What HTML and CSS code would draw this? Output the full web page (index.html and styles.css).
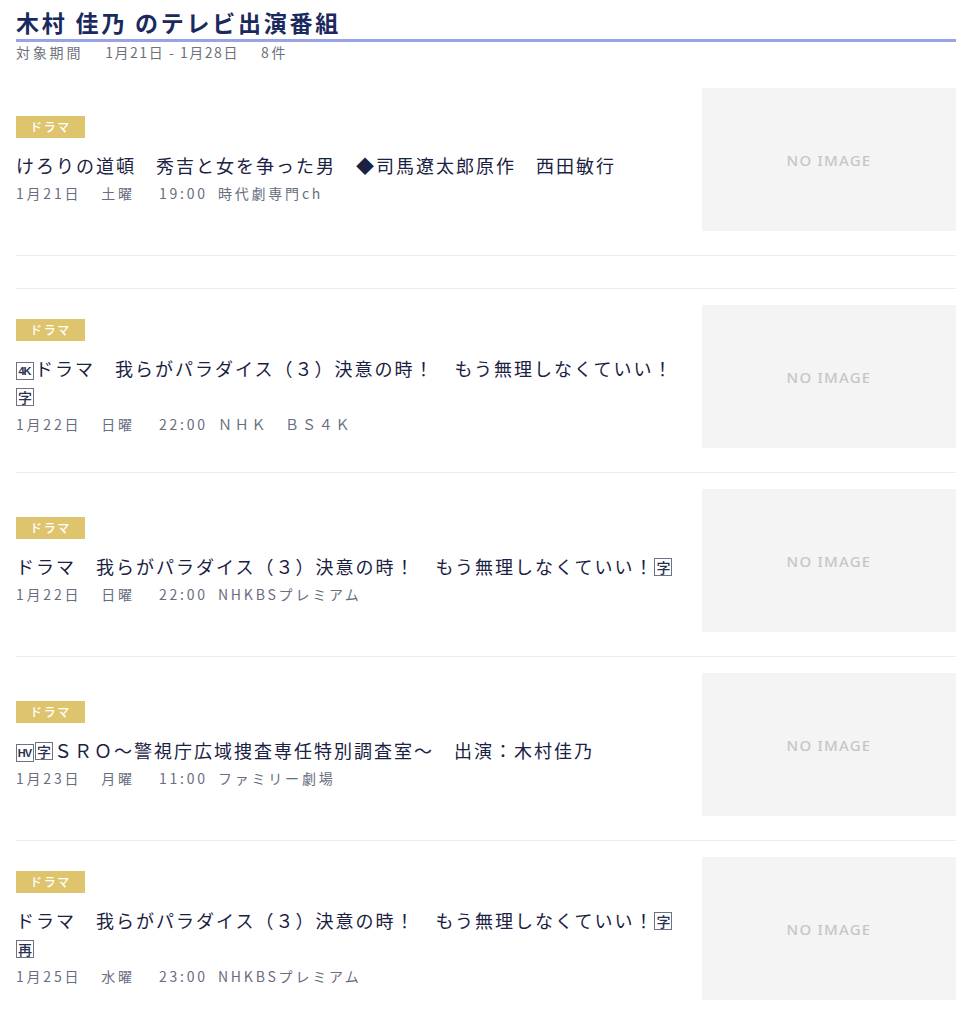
FILE: index.html
```html
<!DOCTYPE html>
<html lang="ja">
<head>
<meta charset="utf-8">
<title>木村 佳乃 のテレビ出演番組</title>
<link rel="stylesheet" href="styles.css">
</head>
<body>
<div class="page">
  <header class="head">
    <h1 class="head-title">木村 佳乃 のテレビ出演番組</h1>
    <p class="head-sub"><span class="hs">対象期間</span><span class="hs hs-date">1月21日 - 1月28日</span><span>8件</span></p>
  </header>

  <ul class="list">
    <li class="item">
      <div class="info">
        <span class="badge">ドラマ</span>
        <p class="title">けろりの道頓　秀吉と女を争った男　◆司馬遼太郎原作　西田敏行</p>
        <p class="meta"><span class="m-date">1月21日</span><span class="m-day">土曜</span><span class="m-time">19:00</span><span>時代劇専門ch</span></p>
      </div>
      <div class="thumb">NO IMAGE</div>
    </li>
    <li class="spacer"></li>
    <li class="item">
      <div class="info">
        <span class="badge">ドラマ</span>
        <p class="title"><span class="sq sq-wide">4K</span>ドラマ　我らがパラダイス（３）決意の時！　もう無理しなくていい！<span class="sq">字</span></p>
        <p class="meta"><span class="m-date">1月22日</span><span class="m-day">日曜</span><span class="m-time">22:00</span><span>ＮＨＫ　ＢＳ４Ｋ</span></p>
      </div>
      <div class="thumb">NO IMAGE</div>
    </li>
    <li class="item">
      <div class="info">
        <span class="badge">ドラマ</span>
        <p class="title">ドラマ　我らがパラダイス（３）決意の時！　もう無理しなくていい！<span class="sq">字</span></p>
        <p class="meta"><span class="m-date">1月22日</span><span class="m-day">日曜</span><span class="m-time">22:00</span><span>NHKBSプレミアム</span></p>
      </div>
      <div class="thumb">NO IMAGE</div>
    </li>
    <li class="item">
      <div class="info">
        <span class="badge">ドラマ</span>
        <p class="title"><span class="sq sq-wide">HV</span><span class="sq">字</span>ＳＲＯ～警視庁広域捜査専任特別調査室～　出演：木村佳乃</p>
        <p class="meta"><span class="m-date">1月23日</span><span class="m-day">月曜</span><span class="m-time">11:00</span><span>ファミリー劇場</span></p>
      </div>
      <div class="thumb">NO IMAGE</div>
    </li>
    <li class="item">
      <div class="info">
        <span class="badge">ドラマ</span>
        <p class="title">ドラマ　我らがパラダイス（３）決意の時！　もう無理しなくていい！<span class="sq">字</span> <span class="sq">再</span></p>
        <p class="meta"><span class="m-date">1月25日</span><span class="m-day">水曜</span><span class="m-time">23:00</span><span>NHKBSプレミアム</span></p>
      </div>
      <div class="thumb">NO IMAGE</div>
    </li>
  </ul>
</div>
</body>
</html>
```

FILE: styles.css
```css
* { box-sizing: border-box; }

html, body {
  margin: 0;
  padding: 0;
  background: #fff;
}

body {
  font-family: "Noto Sans CJK JP", "Noto Sans", sans-serif;
  color: #1e2647;
}

.page {
  padding: 7px 12px 0 16px;
}

.head-title {
  margin: 0;
  font-size: 23px;
  line-height: 31px;
  font-weight: 700;
  color: #1b2a5e;
  letter-spacing: 0.12em;
  padding-bottom: 1px;
  border-bottom: 3px solid #98a4ea;
}

.head-sub {
  margin: 0;
  font-size: 14px;
  line-height: 20px;
  color: #6e727d;
  letter-spacing: 0.2em;
}

.hs {
  margin-right: 22px;
}

.hs-date {
  letter-spacing: 0.11em;
}

.list {
  list-style: none;
  margin: 0;
  padding: 0;
  margin-top: 6px;
}

.item {
  display: flex;
  align-items: center;
  gap: 16px;
  padding: 20px 0 24px;
  border-bottom: 1px solid #ececf1;
}

.item + .item,
.spacer + .item {
  padding-top: 16px;
}

.spacer {
  height: 33px;
  border-bottom: 1px solid #ececf1;
}

.info {
  flex: 1;
  min-width: 0;
}

.badge {
  display: inline-block;
  background: #dfc46e;
  color: #fff;
  font-size: 12px;
  line-height: 22px;
  height: 22px;
  padding: 0 14px;
  letter-spacing: 0.14em;
  font-weight: 500;
  vertical-align: top;
}

.title {
  margin: 11px 0 4px;
  font-size: 18px;
  line-height: 28px;
  font-weight: 400;
  letter-spacing: 2px;
  color: #1a2142;
}

.sq {
  display: inline-block;
  vertical-align: 1px;
  width: 18px;
  height: 18px;
  border: 1px solid #6d7284;
  font-size: 14px;
  line-height: 16px;
  text-align: center;
  letter-spacing: 0;
  color: #2a3150;
  font-weight: 500;
  margin-right: 1px;
}

.sq-wide {
  font-size: 11px;
  letter-spacing: -1px;
  font-family: "Liberation Sans", sans-serif;
  font-weight: 700;
  padding-right: 1px;
}

.meta {
  margin: 0;
  font-size: 14px;
  line-height: 20px;
  color: #686e80;
  letter-spacing: 0.2em;
}

.m-date {
  margin-right: 20px;
}

.m-day {
  margin-right: 24px;
}

.m-time {
  margin-right: 10px;
}

.thumb {
  flex: 0 0 254px;
  height: 143px;
  background: #f4f4f4;
  color: #c6c6c6;
  display: flex;
  align-items: center;
  justify-content: center;
  font-family: "Noto Sans", sans-serif;
  font-size: 15px;
  letter-spacing: 0.08em;
  font-weight: 500;
}
```
